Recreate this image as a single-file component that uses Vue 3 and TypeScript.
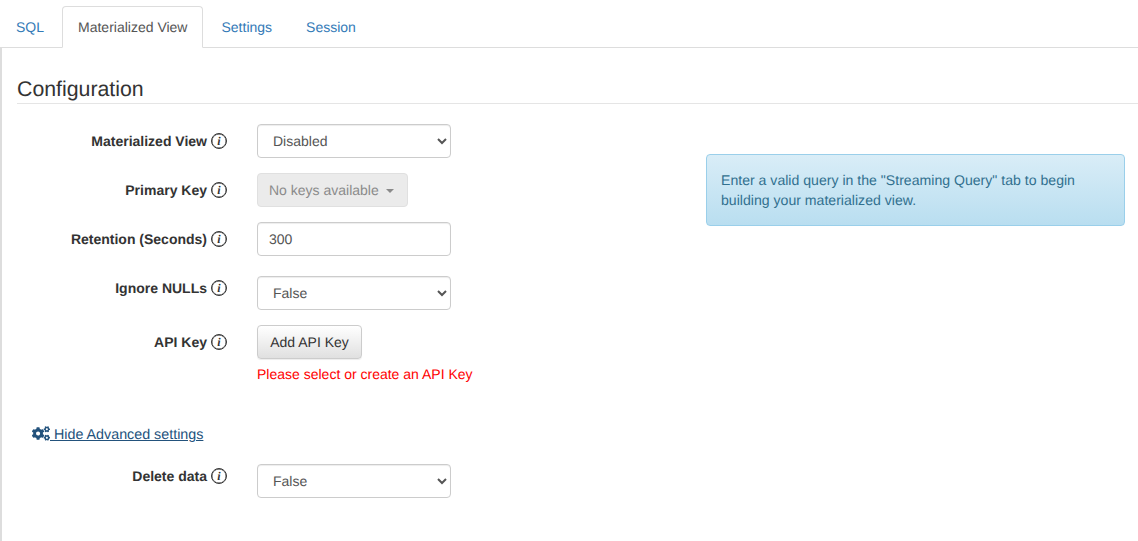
<script setup lang="ts">
import { ref } from 'vue';

const tabs = ['SQL', 'Materialized View', 'Settings', 'Session'];
const activeTab = ref('Materialized View');
const retention = ref('300');
</script>

<template>
  <div class="page">
    <ul class="tabs">
      <li v-for="tab in tabs" :key="tab" class="tab" :class="{ active: tab === activeTab }">
        <a href="#" @click.prevent="activeTab = tab">{{ tab }}</a>
      </li>
    </ul>

    <div class="content">
      <h3 class="heading">Configuration</h3>

      <div class="columns">
        <form class="form" @submit.prevent>
          <div class="row">
            <div class="row-label"><label>Materialized View</label><span class="info">i</span></div>
            <select class="control">
              <option>Disabled</option>
              <option>Enabled</option>
            </select>
          </div>

          <div class="row">
            <div class="row-label"><label>Primary Key</label><span class="info">i</span></div>
            <button class="keys" type="button" disabled>No keys available<span class="caret"></span></button>
          </div>

          <div class="row row-wide-gap">
            <div class="row-label"><label>Retention (Seconds)</label><span class="info">i</span></div>
            <input v-model="retention" class="control text-input" type="text" />
          </div>

          <div class="row">
            <div class="row-label row-label-tight"><label>Ignore NULLs</label><span class="info">i</span></div>
            <select class="control">
              <option>False</option>
              <option>True</option>
            </select>
          </div>

          <div class="row row-no-gap">
            <div class="row-label"><label>API Key</label><span class="info">i</span></div>
            <button class="add-key" type="button">Add API Key</button>
          </div>
          <p class="error">Please select or create an API Key</p>

          <a href="#" class="advanced" @click.prevent>
            <svg class="cogs" viewBox="0 0 640 512" aria-hidden="true">
              <path fill="currentColor" d="M512.1 191l-8.2 14.3c-3 5.3-9.4 7.5-15.1 5.4-11.8-4.4-22.6-10.7-32.1-18.6-4.6-3.8-5.8-10.5-2.8-15.7l8.2-14.3c-6.9-8-12.3-17.3-15.9-27.4h-16.5c-6 0-11.2-4.3-12.2-10.3-2-12-2.1-24.6 0-37.1 1-6 6.2-10.4 12.2-10.4h16.5c3.6-10.1 9-19.4 15.9-27.4l-8.2-14.3c-3-5.2-1.9-11.9 2.8-15.7 9.5-7.9 20.4-14.2 32.1-18.6 5.7-2.1 12.1.1 15.1 5.4l8.2 14.3c10.5-1.9 21.2-1.9 31.7 0L552 6.3c3-5.3 9.4-7.5 15.1-5.4 11.8 4.4 22.6 10.7 32.1 18.6 4.6 3.8 5.8 10.5 2.8 15.7l-8.2 14.3c6.9 8 12.3 17.3 15.9 27.4h16.5c6 0 11.2 4.3 12.2 10.3 2 12 2.1 24.6 0 37.1-1 6-6.2 10.4-12.2 10.4h-16.5c-3.6 10.1-9 19.4-15.9 27.4l8.2 14.3c3 5.2 1.9 11.9-2.8 15.7-9.5 7.9-20.4 14.2-32.1 18.6-5.7 2.1-12.1-.1-15.1-5.4l-8.2-14.3c-10.4 1.9-21.2 1.9-31.7 0zm-10.5-58.8c38.5 29.6 82.4-14.3 52.8-52.8-38.5-29.7-82.4 14.3-52.8 52.8zM386.3 286.1l33.7 16.8c10.1 5.8 14.5 18.1 10.5 29.1-8.9 24.2-26.4 46.4-42.6 65.8-7.4 8.9-20.2 11.1-30.3 5.3l-29.1-16.8c-16 13.7-34.6 24.6-54.9 31.7v33.6c0 11.6-8.3 21.6-19.7 23.6-24.6 4.2-50.4 4.4-75.9 0-11.5-2-20-11.9-20-23.6V418c-20.3-7.2-38.9-18-54.9-31.7L74 403c-10 5.8-22.9 3.6-30.3-5.3-16.2-19.4-33.3-41.6-42.2-65.7-4-10.9.4-23.2 10.5-29.1l33.3-16.8c-3.9-20.9-3.9-42.4 0-63.4L12 205.8c-10.1-5.8-14.6-18.1-10.5-29 8.9-24.2 26-46.4 42.2-65.8 7.4-8.9 20.2-11.1 30.3-5.3l29.1 16.8c16-13.7 34.6-24.6 54.9-31.7V57.1c0-11.5 8.2-21.5 19.6-23.5 24.6-4.2 50.5-4.4 76-.1 11.5 2 20 11.9 20 23.6v33.6c20.3 7.2 38.9 18 54.9 31.7l29.1-16.8c10-5.8 22.9-3.6 30.3 5.3 16.2 19.4 33.2 41.6 42.1 65.8 4 10.9.1 23.2-10 29.1l-33.7 16.8c3.9 21 3.9 42.5 0 63.5zm-117.6 21.1c59.2-77-28.7-164.9-105.7-105.7-59.2 77 28.7 164.9 105.7 105.7zm243.4 182.7l-8.2 14.3c-3 5.3-9.4 7.5-15.1 5.4-11.8-4.4-22.6-10.7-32.1-18.6-4.6-3.8-5.8-10.5-2.8-15.7l8.2-14.3c-6.9-8-12.3-17.3-15.9-27.4h-16.5c-6 0-11.2-4.3-12.2-10.3-2-12-2.1-24.6 0-37.1 1-6 6.2-10.4 12.2-10.4h16.5c3.6-10.1 9-19.4 15.9-27.4l-8.2-14.3c-3-5.2-1.9-11.9 2.8-15.7 9.5-7.9 20.4-14.2 32.1-18.6 5.7-2.1 12.1.1 15.1 5.4l8.2 14.3c10.5-1.9 21.2-1.9 31.7 0l8.2-14.3c3-5.3 9.4-7.5 15.1-5.4 11.8 4.4 22.6 10.7 32.1 18.6 4.6 3.8 5.8 10.5 2.8 15.7l-8.2 14.3c6.9 8 12.3 17.3 15.9 27.4h16.5c6 0 11.2 4.3 12.2 10.3 2 12 2.1 24.6 0 37.1-1 6-6.2 10.4-12.2 10.4h-16.5c-3.6 10.1-9 19.4-15.9 27.4l8.2 14.3c3 5.2 1.9 11.9-2.8 15.7-9.5 7.9-20.4 14.2-32.1 18.6-5.7 2.1-12.1-.1-15.1-5.4l-8.2-14.3c-10.4 1.9-21.2 1.9-31.7 0zM501.6 431c38.5 29.6 82.4-14.3 52.8-52.8-38.5-29.6-82.4 14.3-52.8 52.8z" />
            </svg><span class="advanced-text"> Hide Advanced settings</span>
          </a>

          <div class="row row-no-gap">
            <div class="row-label row-label-tight"><label>Delete data</label><span class="info">i</span></div>
            <select class="control">
              <option>False</option>
              <option>True</option>
            </select>
          </div>
        </form>

        <aside class="notice">
          Enter a valid query in the "Streaming Query" tab to begin building your materialized view.
        </aside>
      </div>
    </div>
  </div>
</template>

<style scoped>
.page {
  height: 541px;
  display: flex;
  flex-direction: column;
  font-family: "Liberation Sans", Arial, sans-serif;
  font-size: 14px;
  line-height: 20px;
  text-rendering: geometricPrecision;
  color: #333;
  background: #fff;
  overflow: hidden;
}

.page select,
.page input,
.page button {
  text-rendering: geometricPrecision;
}

/* tabs */
.tabs {
  display: flex;
  height: 48px;
  box-sizing: border-box;
  margin: 0;
  padding: 6px 0 0;
  list-style: none;
  border-bottom: 1px solid #ddd;
}

.tab {
  margin-right: 2px;
  margin-bottom: -1px;
}

.tab a {
  display: block;
  height: 42px;
  box-sizing: border-box;
  padding: 10px 15px 11px;
  border: 1px solid transparent;
  border-radius: 4px 4px 0 0;
  color: #337ab7;
  text-decoration: none;
}

.tab.active a {
  color: #555;
  background: #fff;
  border-color: #ddd #ddd #fff;
}

/* body */
.content {
  flex: 1;
  border-left: 2px solid #ddd;
}

.heading {
  margin: 0 0 0 15px;
  padding: 28px 0 0;
  font-size: 21.3px;
  font-weight: 400;
  line-height: 27px;
  border-bottom: 1px solid #e5e5e5;
}

.columns {
  display: flex;
  padding-top: 20px;
}

.form {
  width: 690px;
}

.row {
  display: flex;
  align-items: flex-start;
  margin-bottom: 15px;
}

.row-wide-gap {
  margin-bottom: 20px;
}

.row-no-gap {
  margin-bottom: 0;
}

.row-label {
  width: 225px;
  display: flex;
  justify-content: flex-end;
  align-items: center;
  gap: 4px;
  padding-top: 7px;
  margin-right: 30px;
  font-weight: 700;
}

.row-label-tight {
  padding-top: 2px;
}

.info {
  width: 16px;
  height: 16px;
  box-sizing: border-box;
  display: flex;
  align-items: center;
  justify-content: center;
  border: 1px solid #333;
  border-radius: 50%;
  box-shadow: inset 0 0 0 0.4px #333;
  font-family: "Liberation Serif", serif;
  font-size: 12px;
  font-style: italic;
  font-weight: 700;
  line-height: 14px;
}

.control {
  width: 194px;
  height: 34px;
  box-sizing: border-box;
  padding: 0 11px;
  border: 1px solid #ccc;
  border-radius: 4px;
  background-color: #fff;
  box-shadow: inset 0 1px 1px rgba(0, 0, 0, 0.075);
  color: #555;
  font: 14px "Liberation Sans", Arial, sans-serif;
}

.keys {
  height: 34px;
  width: 151px;
  padding: 0 11px;
  text-align: left;
  white-space: nowrap;
  border: 1px solid #e0e0e0;
  border-radius: 4px;
  background: #ebebeb;
  color: #8a8a8a;
  font: 14px "Liberation Sans", Arial, sans-serif;
}

.caret {
  display: inline-block;
  margin-left: 7px;
  vertical-align: middle;
  border-top: 4px solid #8a8a8a;
  border-left: 4px solid transparent;
  border-right: 4px solid transparent;
}

.add-key {
  width: 105px;
  height: 34px;
  padding: 0;
  border: 1px solid #ccc;
  border-radius: 4px;
  background: linear-gradient(to bottom, #fff, #e0e0e0);
  box-shadow: inset 0 1px 0 rgba(255, 255, 255, 0.15), 0 1px 1px rgba(0, 0, 0, 0.075);
  color: #333;
  font: 14px "Liberation Sans", Arial, sans-serif;
}

.error {
  margin: 5px 0 0 255px;
  color: #f00;
}

.advanced {
  display: block;
  margin: 41px 0 19px 30px;
  font-size: 14.3px;
  color: #23527c;
  white-space: pre;
  text-decoration: none;
}

.advanced-text {
  text-decoration: underline;
}

.cogs {
  width: 18px;
  height: 15px;
  vertical-align: -2px;
}

.notice {
  width: 419px;
  height: 72px;
  box-sizing: border-box;
  margin: 30px 0 0 14px;
  padding: 15px 14px;
  font-size: 14.1px;
  border: 1px solid #9acfea;
  border-radius: 4px;
  background: linear-gradient(to bottom, #d9edf7, #b9def0);
  color: #31708f;
}
</style>
